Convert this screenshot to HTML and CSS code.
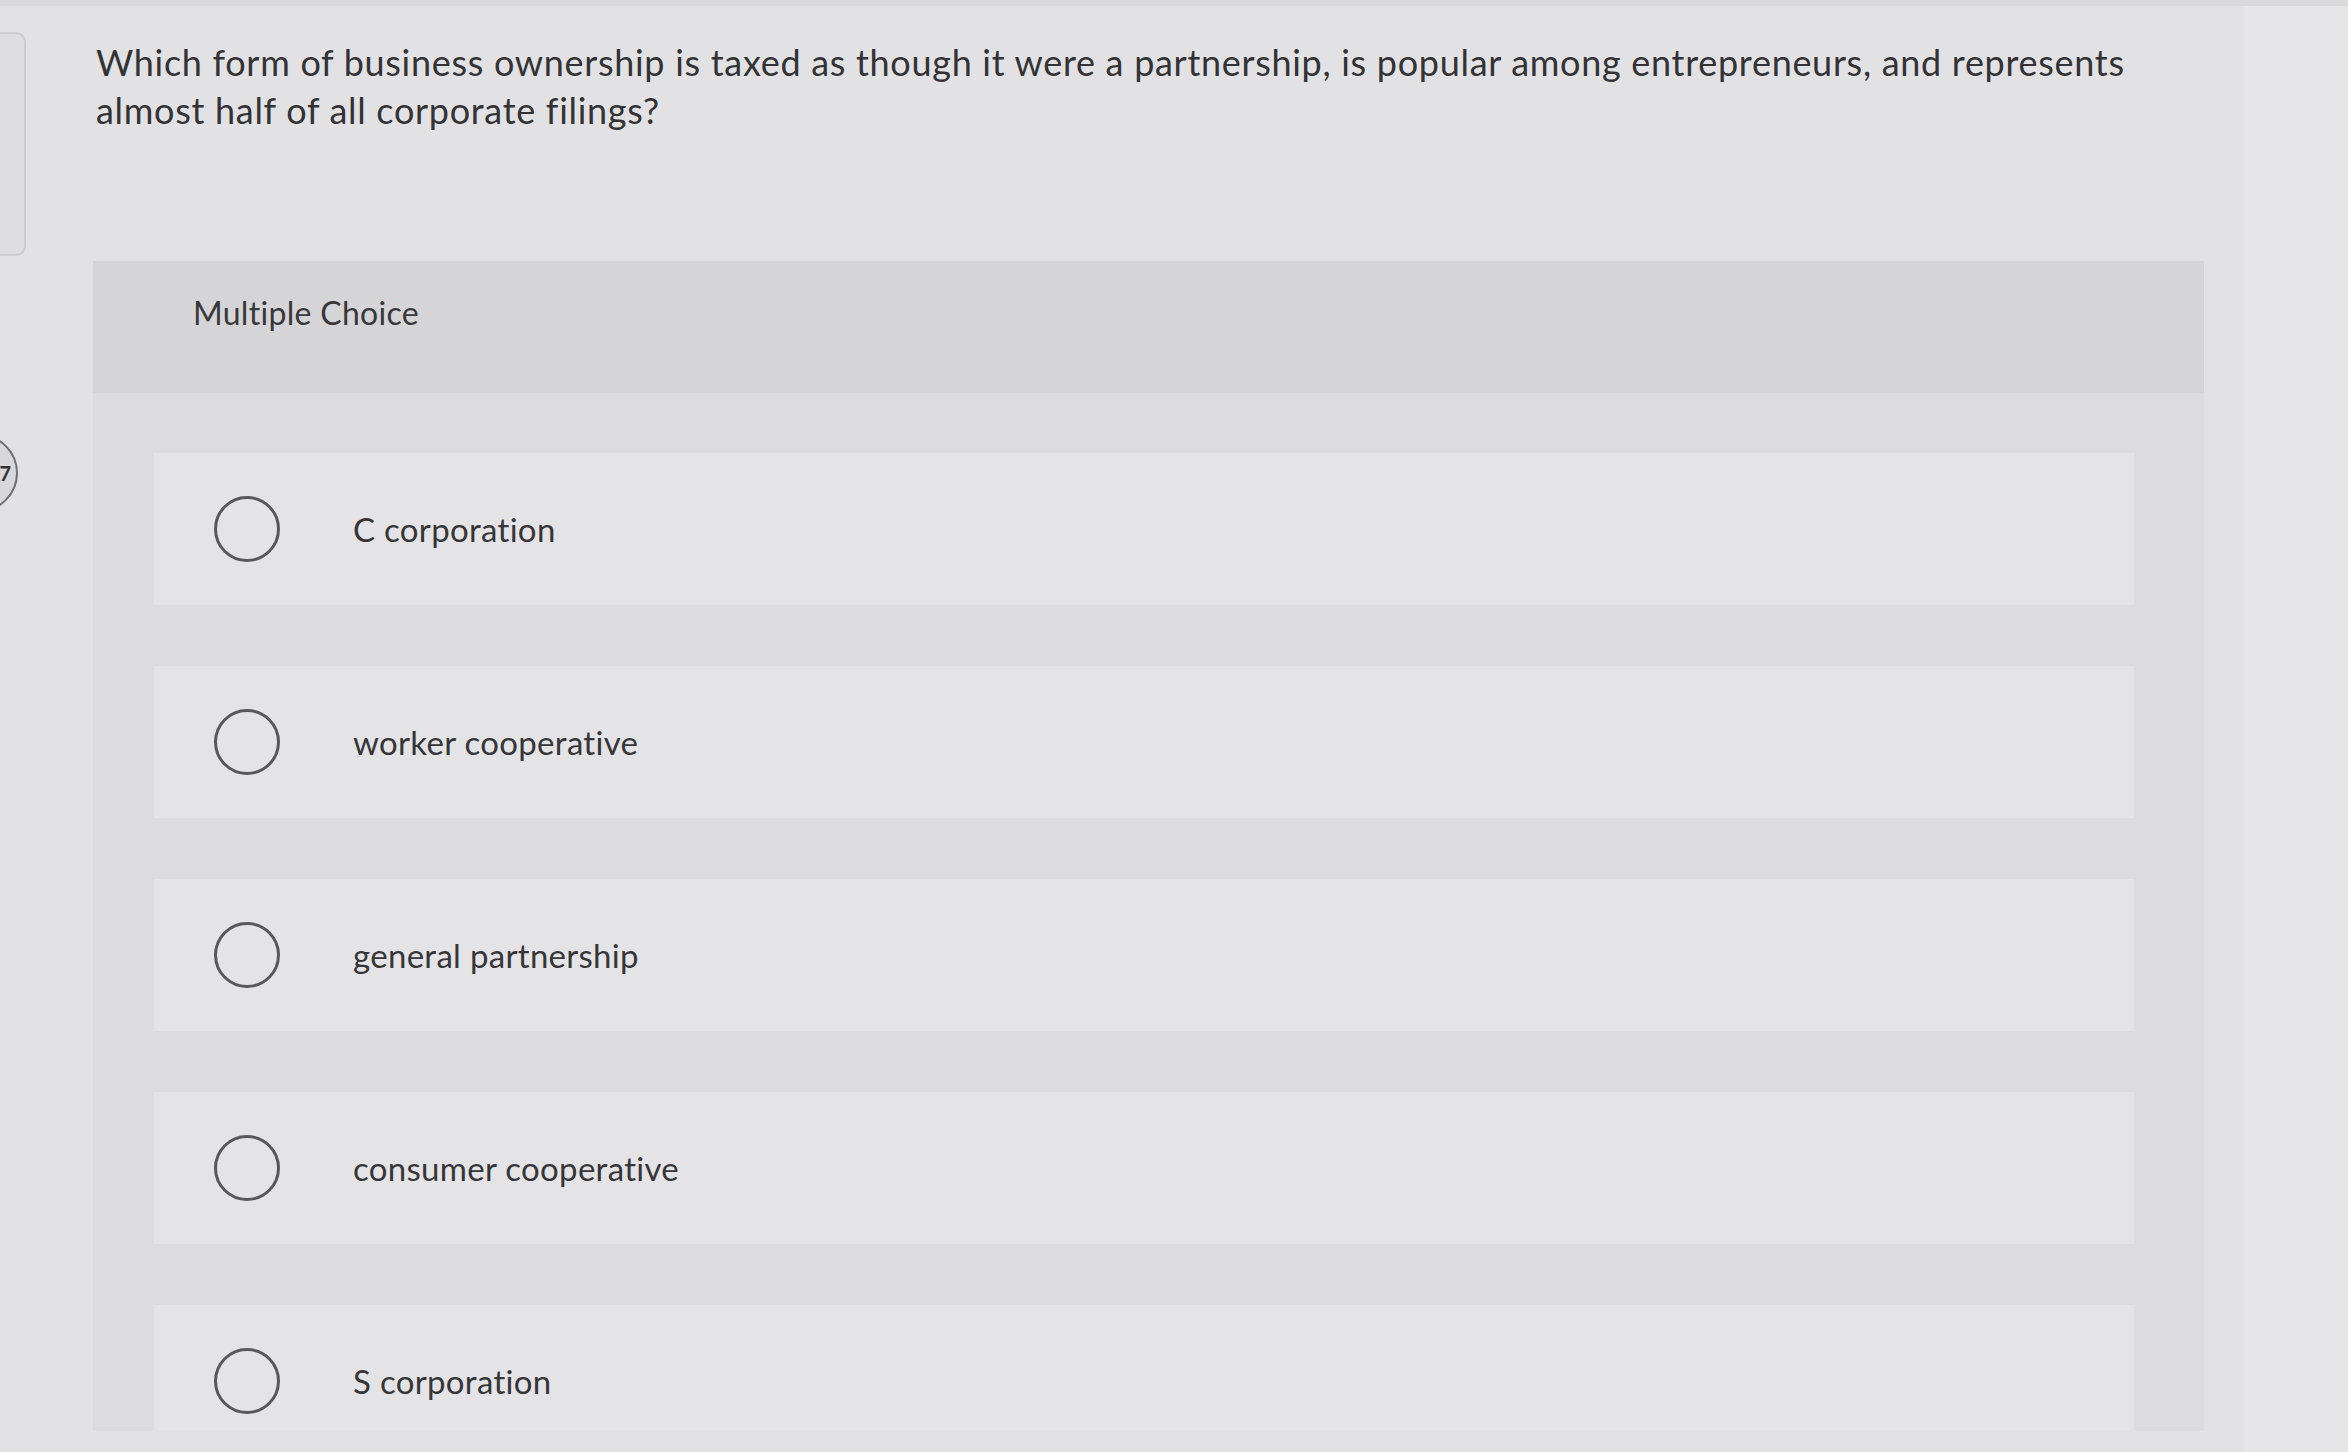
FILE: index.html
```html
<!DOCTYPE html>
<html lang="en">
<head>
<meta charset="utf-8">
<title>Multiple Choice</title>
<link rel="stylesheet" href="styles.css">
</head>
<body>
<div class="page">
  <aside class="rail">
    <div class="tab"></div>
    <div class="badge"><span class="badge-num">7</span></div>
  </aside>
  <main class="main">
    <p class="question">Which form of business ownership is taxed as though it were a partnership, is popular among entrepreneurs, and represents almost half of all corporate filings?</p>
    <section class="panel">
      <header class="panel-head">Multiple Choice</header>
      <div class="panel-body">
        <label class="option"><span class="radio"></span><span class="option-text">C corporation</span></label>
        <label class="option"><span class="radio"></span><span class="option-text">worker cooperative</span></label>
        <label class="option"><span class="radio"></span><span class="option-text">general partnership</span></label>
        <label class="option"><span class="radio"></span><span class="option-text">consumer cooperative</span></label>
        <label class="option"><span class="radio"></span><span class="option-text">S corporation</span></label>
      </div>
    </section>
  </main>
  <div class="edge"></div>
</div>
</body>
</html>
```

FILE: styles.css
```css
html, body {
  margin: 0;
  padding: 0;
}

body {
  background: #e2e2e4;
  font-family: Lato, "Liberation Sans", Arial, sans-serif;
  color: #343436;
  overflow: hidden;
  height: 1452px;
}

.page {
  display: flex;
  height: 1452px;
  border-top: 6px solid #d9d9db;
  box-sizing: border-box;
}

.rail {
  flex: none;
  width: 28px;
  display: flex;
  flex-direction: column;
}

.tab {
  width: 24px;
  height: 220px;
  margin-top: 26px;
  border: 2px solid #cdcdcf;
  border-left: none;
  border-radius: 0 10px 10px 0;
  background: #dedee0;
}

.badge {
  width: 78px;
  height: 78px;
  margin-top: 178px;
  margin-left: -60px;
  border: 2px solid #6e6e70;
  border-radius: 50%;
  background: #d8d8da;
  display: flex;
  align-items: center;
  justify-content: flex-end;
  padding-right: 5px;
  box-sizing: border-box;
}

.badge-num {
  font-size: 20px;
  font-weight: 700;
  line-height: 20px;
  color: #333;
}

.main {
  flex: none;
  width: 2111px;
  margin-left: 65px;
}

.question {
  margin: 32px 0 0 3px;
  font-size: 36px;
  letter-spacing: 0.7px;
  line-height: 48px;
  width: 2085px;
  color: #333335;
}

.panel {
  margin-top: 127px;
  background: #dcdcde;
  height: 1170px;
  overflow: hidden;
}

.panel-head {
  height: 132px;
  background: #d5d5d7;
  padding: 33px 0 0 100px;
  box-sizing: border-box;
  font-size: 32px;
  letter-spacing: 0.3px;
  line-height: 38px;
  color: #38383a;
}

.panel-body {
  display: flex;
  flex-direction: column;
  gap: 61px;
  padding: 60px 70px 0 61px;
}

.option {
  display: flex;
  align-items: center;
  height: 152px;
  flex: none;
  background: #e4e4e6;
  padding-left: 60px;
}

.radio {
  flex: none;
  width: 66px;
  height: 66px;
  border: 3px solid #58585a;
  border-radius: 50%;
  box-sizing: border-box;
}

.option-text {
  margin-left: 73px;
  font-size: 33px;
  letter-spacing: 0.3px;
  color: #363638;
}

.edge {
  flex: 1;
  margin-left: 40px;
  background: #e6e6e8;
}
```
